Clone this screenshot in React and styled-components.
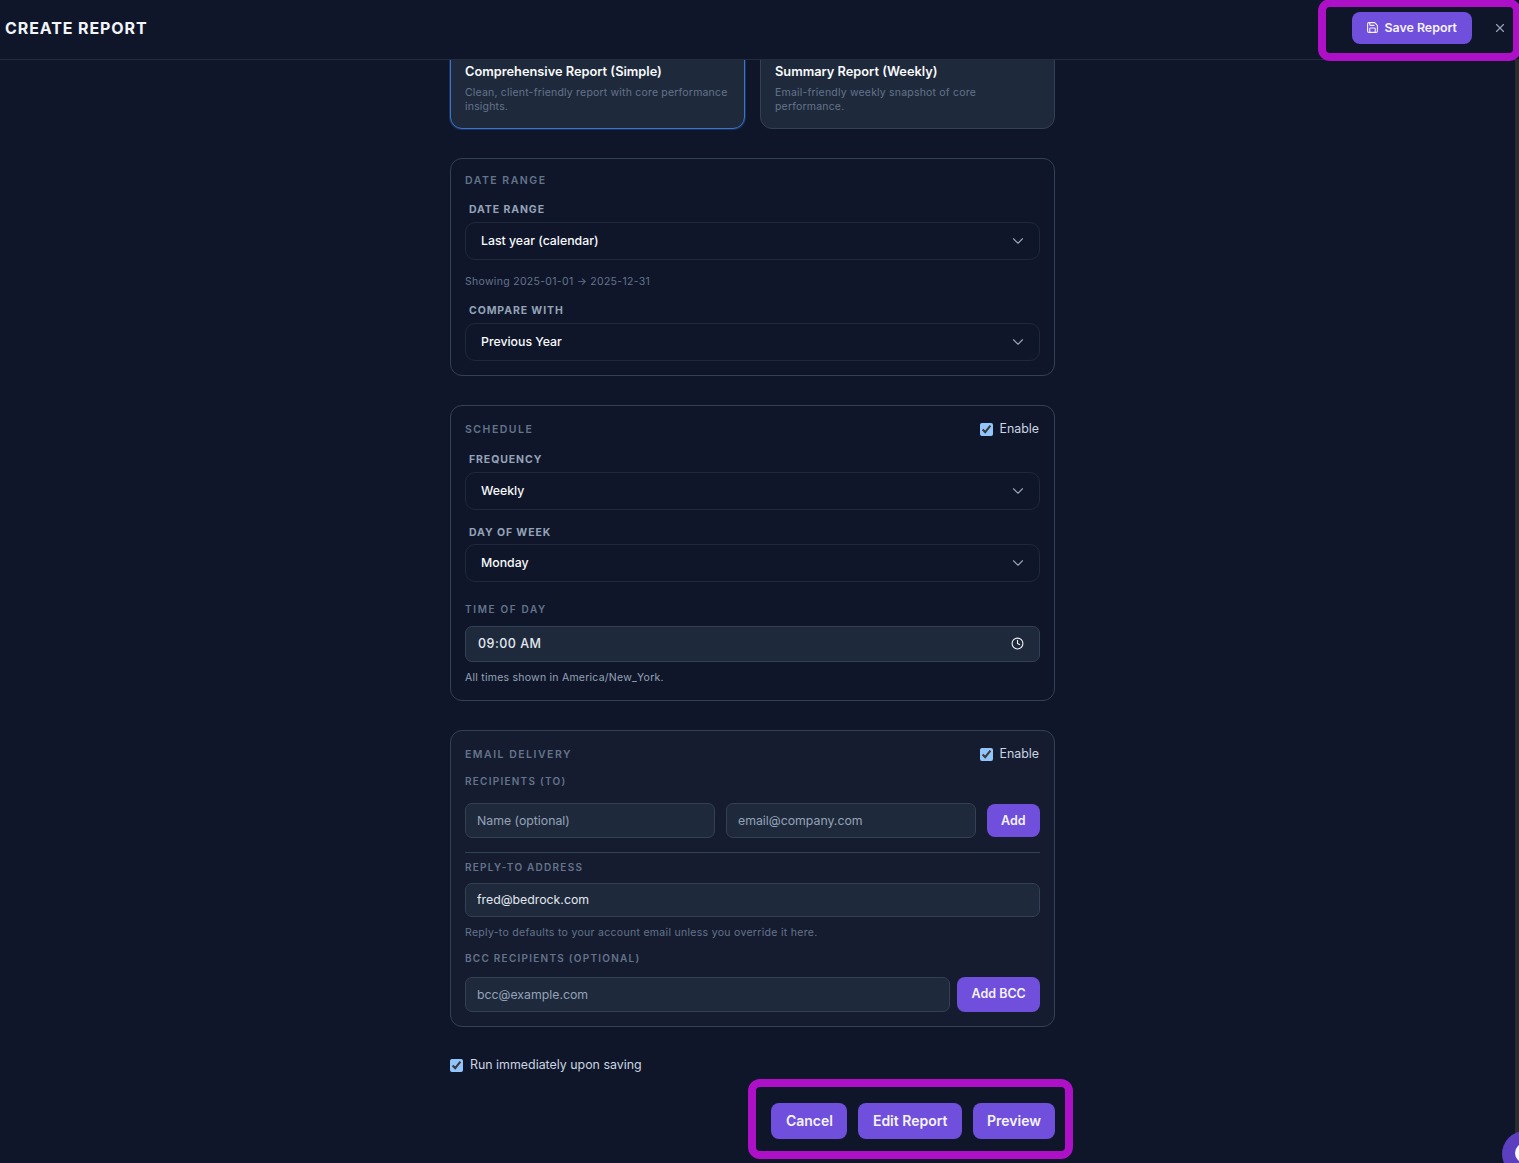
import React from "react";
import styled, { createGlobalStyle } from "styled-components";
import { Save, X, ChevronDown, Clock } from "lucide-react";

const Global = createGlobalStyle`
  html, body { margin: 0; padding: 0; background: #0f1629; }
  body { font-family: Inter, "Noto Sans", sans-serif; -webkit-font-smoothing: antialiased; }
  * { box-sizing: border-box; }
`;

const Page = styled.div`
  position: relative;
  width: 1519px;
  height: 1163px;
  overflow: hidden;
  display: flex;
  flex-direction: column;
  background: #0f1629;
`;
const Header = styled.header`
  flex: 0 0 60px;
  display: flex;
  align-items: center;
  justify-content: space-between;
  padding: 0 12px 3px 5px;
  background: #0f1629;
  border-bottom: 1px solid #242c3e;
`;
const Title = styled.h1`
  margin: 0;
  font-size: 16px;
  line-height: 20px;
  font-weight: 700;
  letter-spacing: 0.9px;
  color: #f1f5f9;
`;
const HeaderActions = styled.div`
  display: flex;
  align-items: center;
  gap: 21px;
`;
const Button = styled.button`
  flex: none;
  display: inline-flex;
  align-items: center;
  justify-content: center;
  gap: 5px;
  height: ${(p) => p.$h || 36}px;
  padding: 0 ${(p) => p.$pr || p.$px || 14}px ${(p) => p.$pb ?? 2}px ${(p) => p.$px || 14}px;
  border: 0;
  border-radius: 8px;
  background: #6f4fdb;
  color: #f5f3ff;
  font-family: inherit;
  font-size: ${(p) => p.$fs || 14}px;
  font-weight: 600;
  white-space: nowrap;
`;
const CloseBtn = styled.span`
  display: flex;
  color: #94a3b8;
`;
const Body = styled.div`
  flex: 1;
  display: flex;
  min-height: 0;
`;
const Main = styled.main`
  flex: 1;
  overflow: hidden;
`;
const Column = styled.div`
  width: 605px;
  margin: -40px 0 0 450px;
  display: flex;
  flex-direction: column;
`;
const ScrollStrip = styled.div`
  flex: 0 0 4px;
  background: #2a2c30;
`;
const Cards = styled.div`
  display: grid;
  grid-template-columns: 295px 295px;
  gap: 15px;
  height: 109px;
  margin-bottom: 29px;
`;
const ReportCard = styled.div`
  padding: 41px 12px 0 14px;
  border-radius: 12px;
  background: #1e293b;
  border: 1px solid ${(p) => (p.$active ? "#3b74c9" : "#334155")};
  box-shadow: ${(p) => (p.$active ? "0 0 0 1px rgba(59,130,246,.25)" : "none")};
`;
const CardTitle = styled.div`
  font-size: 12.8px;
  line-height: 20px;
  font-weight: 600;
  color: #f8fafc;
`;
const CardDesc = styled.div`
  margin-top: 4px;
  max-width: 264px;
  font-size: 10.5px;
  line-height: 14px;
  letter-spacing: 0.19px;
  color: #64748b;
`;
const Section = styled.section`
  height: ${(p) => p.$h}px;
  margin-bottom: 29px;
  padding: 0 14px;
  border: 1px solid #334155;
  border-radius: 12px;
  background: ${(p) => p.$bg || "transparent"};
`;
const SectionHead = styled.div`
  display: flex;
  align-items: center;
  justify-content: space-between;
  height: 16px;
  margin-top: ${(p) => p.$mt}px;
`;
const SectionTitle = styled.div`
  padding-top: 2px;
  font-size: 10.5px;
  line-height: 16px;
  font-weight: 600;
  letter-spacing: 1.5px;
  color: #64748b;
`;
const CheckLabel = styled.label`
  display: flex;
  align-items: center;
  gap: ${(p) => p.$gap || 7}px;
  padding-right: ${(p) => p.$pr || 0}px;
  font-size: 12.4px;
  font-weight: 400;
  line-height: 16px;
  color: #cbd5e1;
`;
const Check = styled.input`
  width: 13px;
  height: 13px;
  margin: 0;
  accent-color: #93c5fd;
`;
const FieldLabel = styled.div`
  height: 14px;
  margin-top: ${(p) => p.$mt}px;
  padding-left: 4px;
  font-size: 10.5px;
  line-height: 14px;
  font-weight: 700;
  letter-spacing: 0.9px;
  color: #94a3b8;
`;
const SmallLabel = styled.div`
  height: 14px;
  margin-top: ${(p) => p.$mt}px;
  font-size: 10px;
  line-height: 14px;
  font-weight: 600;
  letter-spacing: ${(p) => p.$ls || 1.25}px;
  color: #64748b;
`;
const SelectBox = styled.div`
  display: flex;
  align-items: center;
  justify-content: space-between;
  height: 38px;
  margin-top: ${(p) => p.$mt}px;
  padding: 0 12px 0 15px;
  border: 1px solid #1e293b;
  border-radius: 10px;
  svg { color: #94a3b8; }
`;
const SelectValue = styled.span`
  margin-bottom: 2px;
  font-size: 12.3px;
  font-weight: 500;
  color: #f8fafc;
`;
const TimeBox = styled.div`
  display: flex;
  align-items: center;
  justify-content: space-between;
  height: 36px;
  margin-top: 10px;
  padding: 0 15px 1px 12px;
  background: #1e293b;
  border: 1px solid #334155;
  border-radius: 7px;
  font-size: 12.5px;
  font-weight: 500;
  letter-spacing: 0.5px;
  white-space: pre;
  color: #e2e8f0;
`;
const Note = styled.div`
  height: 14px;
  margin-top: ${(p) => p.$mt}px;
  font-size: 10.5px;
  line-height: 14px;
  letter-spacing: ${(p) => p.$ls || 0.3}px;
  color: ${(p) => p.$c || "#64748b"};
`;
const Row = styled.div`
  display: flex;
  align-items: center;
  gap: ${(p) => p.$gap}px;
  margin-top: ${(p) => p.$mt}px;
`;
const TextInput = styled.input`
  flex: ${(p) => (p.$w ? `0 0 ${p.$w}px` : "1")};
  width: ${(p) => (p.$w ? `${p.$w}px` : "100%")};
  height: ${(p) => p.$h || 35}px;
  padding: 0 11px 1px;
  background: #1e293b;
  border: 1px solid #334155;
  border-radius: 7px;
  outline: none;
  font-family: inherit;
  font-size: 12.3px;
  color: #e2e8f0;
  &::placeholder { color: #94a3b8; opacity: 1; }
`;
const Divider = styled.hr`
  height: 1px;
  margin: 14px 0 0;
  border: 0;
  background: #334155;
`;
const RunRow = styled.div`
  height: 16px;
  margin-top: 1px;
`;
const Footer = styled.div`
  display: flex;
  justify-content: flex-end;
  gap: 11px;
  margin-top: 30px;
`;
const Highlight = styled.div`
  position: absolute;
  left: ${(p) => p.$x}px;
  top: ${(p) => p.$y}px;
  width: ${(p) => p.$w}px;
  height: ${(p) => p.$h}px;
  border: 8px solid #ad10c6;
  border-radius: 12px;
  pointer-events: none;
`;
const ChatBubble = styled.div`
  position: absolute;
  left: 1502px;
  top: 1131px;
  width: 46px;
  height: 46px;
  border-radius: 50%;
  background: #5b3fbe;
`;
const ChatDot = styled.div`
  position: absolute;
  left: 13px;
  top: 12px;
  width: 20px;
  height: 20px;
  border-radius: 50%;
  background: #f8fafc;
`;

const Chevron = () => <ChevronDown size={18} strokeWidth={1.5} />;

export default function App() {
  return (
    <Page>
      <Global />
      <Header>
        <Title>CREATE REPORT</Title>
        <HeaderActions>
          <Button $h={32} $fs={12.4} $px={14} $pr={15}>
            <Save size={13} strokeWidth={2} />
            Save Report
          </Button>
          <CloseBtn><X size={14} strokeWidth={2} /></CloseBtn>
        </HeaderActions>
      </Header>
      <Body>
        <Main>
          <Column>
            <Cards>
              <ReportCard $active>
                <CardTitle>Comprehensive Report (Simple)</CardTitle>
                <CardDesc>Clean, client-friendly report with core performance insights.</CardDesc>
              </ReportCard>
              <ReportCard>
                <CardTitle>Summary Report (Weekly)</CardTitle>
                <CardDesc>Email-friendly weekly snapshot of core performance.</CardDesc>
              </ReportCard>
            </Cards>

            <Section $h={218}>
              <SectionHead $mt={13}><SectionTitle>DATE RANGE</SectionTitle></SectionHead>
              <FieldLabel $mt={15}>DATE RANGE</FieldLabel>
              <SelectBox $mt={5}><SelectValue>Last year (calendar)</SelectValue><Chevron /></SelectBox>
              <Note $mt={15}>Showing 2025-01-01 → 2025-12-31</Note>
              <FieldLabel $mt={15}>COMPARE WITH</FieldLabel>
              <SelectBox $mt={5}><SelectValue>Previous Year</SelectValue><Chevron /></SelectBox>
            </Section>

            <Section $h={296}>
              <SectionHead $mt={15}>
                <SectionTitle>SCHEDULE</SectionTitle>
                <CheckLabel $pr={1} $gap={6}><Check type="checkbox" defaultChecked />Enable</CheckLabel>
              </SectionHead>
              <FieldLabel $mt={16}>FREQUENCY</FieldLabel>
              <SelectBox $mt={5}><SelectValue>Weekly</SelectValue><Chevron /></SelectBox>
              <FieldLabel $mt={16}>DAY OF WEEK</FieldLabel>
              <SelectBox $mt={4}><SelectValue>Monday</SelectValue><Chevron /></SelectBox>
              <SmallLabel $mt={20} $ls={1.65}>TIME OF DAY</SmallLabel>
              <TimeBox>09:00 AM<Clock size={13} strokeWidth={2} color="#f1f5f9" /></TimeBox>
              <Note $mt={9} $c="#94a3b8" $ls={0.24}>All times shown in America/New_York.</Note>
            </Section>

            <Section $h={297} $bg="#151c30">
              <SectionHead $mt={15}>
                <SectionTitle>EMAIL DELIVERY</SectionTitle>
                <CheckLabel $pr={1} $gap={6}><Check type="checkbox" defaultChecked />Enable</CheckLabel>
              </SectionHead>
              <SmallLabel $mt={12}>RECIPIENTS (TO)</SmallLabel>
              <Row $gap={11} $mt={15}>
                <TextInput $w={250} placeholder="Name (optional)" />
                <TextInput $w={250} placeholder="email@company.com" />
                <Button $h={33} $fs={12.5} $px={14} $pb={0}>Add</Button>
              </Row>
              <Divider />
              <SmallLabel $mt={7}>REPLY-TO ADDRESS</SmallLabel>
              <Row $gap={0} $mt={9}>
                <TextInput $h={34} defaultValue="fred@bedrock.com" />
              </Row>
              <Note $mt={9}>Reply-to defaults to your account email unless you override it here.</Note>
              <SmallLabel $mt={11}>BCC RECIPIENTS (OPTIONAL)</SmallLabel>
              <Row $gap={7} $mt={12}>
                <TextInput $w={485} placeholder="bcc@example.com" />
                <Button $h={35} $fs={12.5} $px={14.5}>Add BCC</Button>
              </Row>
            </Section>

            <RunRow>
              <CheckLabel><Check type="checkbox" defaultChecked />Run immediately upon saving</CheckLabel>
            </RunRow>
            <Footer>
              <Button $px={14.5}>Cancel</Button>
              <Button $px={14.5}>Edit Report</Button>
              <Button>Preview</Button>
            </Footer>
          </Column>
        </Main>
        <ScrollStrip />
      </Body>
      <Highlight $x={1318} $y={-1} $w={203} $h={62} />
      <Highlight $x={748} $y={1079} $w={325} $h={80} />
      <ChatBubble><ChatDot /></ChatBubble>
    </Page>
  );
}
